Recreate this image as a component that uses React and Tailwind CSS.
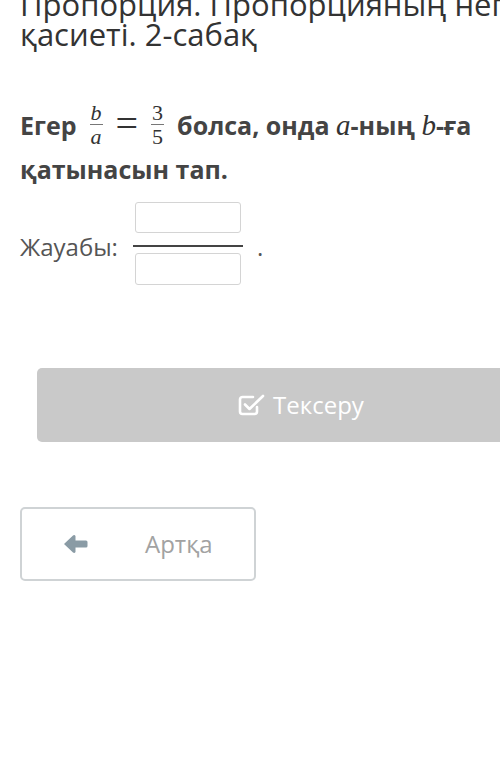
import React from 'react';

const Frac = ({ top, bottom, italic }) => (
  <span className="inline-flex flex-col items-center align-middle mx-[13px] font-['Liberation_Serif',serif] font-normal text-[22px] leading-[19px] text-[#333] relative top-[-4px]">
    <span className={`px-[1px] ${italic ? 'italic' : ''}`}>{top}</span>
    <span className="w-full h-px bg-[#777] my-[2px]" />
    <span className={`px-[1px] ${italic ? 'italic' : ''}`}>{bottom}</span>
  </span>
);

const App = () => {
  return (
    <div className="w-[500px] h-[778px] overflow-hidden bg-white font-['Open_Sans',sans-serif]">
      <h1 className="mt-[-11px] pl-[20px] w-[600px] text-[31px] leading-[30px] text-[#333] font-normal">
        Пропорция. Пропорцияның негізгі
        <br />
        қасиеті. 2-сабақ
      </h1>

      <p className="mt-[57px] pl-[20px] pr-[6px] text-[25px] leading-[38px] font-bold text-[#444]">
        Егер
        <Frac top="b" bottom="a" italic />
        <span className="font-['Liberation_Serif',serif] font-normal text-[40px] leading-[38px] align-middle relative top-[-4px] text-[#333]">=</span>
        <Frac top="3" bottom="5" />
        болса, онда <span className="font-['Liberation_Serif',serif] italic font-normal text-[29px] text-[#333]">a</span>-ның{' '}
        <span className="font-['Liberation_Serif',serif] italic font-normal text-[29px] text-[#333]">b</span>-ға қатынасын тап.
      </p>

      <div className="mt-[14px] pl-[20px] flex items-center">
        <span className="text-[24px] text-[#555] mt-[8px]">Жауабы:</span>
        <div className="ml-[15px] flex flex-col items-center">
          <div className="w-[106px] h-[31px] border border-[#d4d4d4] rounded-[3px]" />
          <div className="w-[110px] h-[2px] bg-[#444] mt-[12px] mb-[6px]" />
          <div className="w-[106px] h-[32px] border border-[#d4d4d4] rounded-[3px]" />
        </div>
        <span className="ml-[14px] text-[24px] text-[#555] mt-[8px]">.</span>
      </div>

      <div className="mt-[83px] ml-[37px] w-[528px] h-[74px] bg-[#c9c9c9] rounded-[5px] flex items-center justify-center gap-[8px] text-white">
        <svg width="27" height="22" viewBox="0 0 27 22" fill="none" stroke="white" strokeWidth="2.6" strokeLinecap="round" strokeLinejoin="round">
          <path d="M15 3H4.5A2.5 2.5 0 0 0 2 5.5v12A2.5 2.5 0 0 0 4.5 20h12a2.5 2.5 0 0 0 2.5-2.5V13" />
          <path d="M7 10.5l4.5 4.5L25 2" />
        </svg>
        <span className="text-[24px] leading-none">Тексеру</span>
      </div>

      <div className="mt-[65px] ml-[20px] w-[236px] h-[74px] border-2 border-[#cfd3d5] rounded-[5px] flex items-center">
        <svg className="ml-[41px]" width="25" height="20" viewBox="0 0 25 20" fill="#8a9ba5">
          <path d="M1 10 L10 1.5 Q11.5 0.5 12.5 2 L12.5 6.5 L23 6.5 Q24.5 6.5 24.5 8 L24.5 12 Q24.5 13.5 23 13.5 L12.5 13.5 L12.5 18 Q11.5 19.5 10 18.5 Z" />
        </svg>
        <span className="ml-[57px] text-[24px] text-[#a2a2a2]">Артқа</span>
      </div>
    </div>
  );
};

export default App;
